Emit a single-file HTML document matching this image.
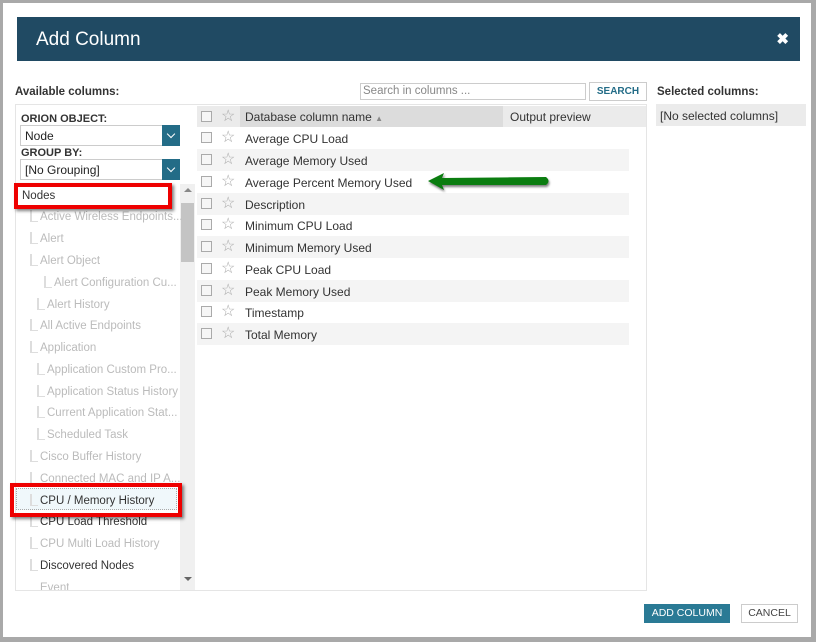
<!DOCTYPE html>
<html><head><style>
*{box-sizing:border-box;margin:0;padding:0}
body{width:816px;height:642px;background:#a9a9a9;font-family:"Liberation Sans",sans-serif;position:relative;overflow:hidden;font-size:12px;color:#222}
.dlg{position:absolute;left:3px;top:3px;width:808px;height:634px;background:#fff}
.hdr{position:absolute;left:17px;top:17px;width:783px;height:44px;background:#204a63;color:#fff;font-size:19px;padding:12px 0 0 19px}
.x{position:absolute;right:11px;top:13px;font-size:15px;font-weight:bold}
.abs{position:absolute}
.lbl{font-weight:bold;font-size:11px;color:#333}
.sel{position:absolute;left:20px;width:160px;height:21px;border:1px solid #ccc;padding:3px 4px;font-size:12px}
.sel b{position:absolute;right:-1px;top:-1px;width:18px;height:21px;background:#236c87}
.sel b:after{content:"";position:absolute;left:6px;top:6px;width:5px;height:5px;border-right:1px solid #fff;border-bottom:1px solid #fff;transform:rotate(45deg)}
.tr{position:absolute;font-size:11.5px;color:#bbb;white-space:nowrap}
.tr:before{content:"";position:absolute;left:-10px;top:-1px;width:6px;height:11px;border-left:2px solid #ddd;border-bottom:1px solid #ddd}
.row{position:absolute;left:197px;width:432px;height:22px}
.row.s{background:#f4f4f4}
.cb{position:absolute;left:4px;top:5px;width:11px;height:11px;border:1px solid #aaa;background:#f6f6f6}
.st{position:absolute;left:24px;top:0px;color:#aaa;font-size:16px;font-style:normal}
.row span.t{position:absolute;left:48px;top:5px;font-size:12px;color:#333}
.red{position:absolute;border:4px solid #e00;box-shadow:2px 2px 3px rgba(0,0,0,.5)}
</style></head><body>
<div class="dlg"></div>
<div class="hdr">Add Column<span class="x">✖</span></div>
<div class="abs lbl" style="left:15px;top:86px;font-size:11.5px">Available columns:</div>
<div class="abs" style="left:360px;top:83px;width:226px;height:17px;border:1px solid #ccc;color:#888;font-size:11.5px;padding:1px 2px">Search in columns ...</div>
<div class="abs" style="left:589px;top:82px;width:58px;height:19px;border:1px solid #ccc;color:#236c87;font-weight:bold;font-size:10px;text-align:center;line-height:17px">SEARCH</div>
<div class="abs lbl" style="left:657px;top:86px;font-size:11.5px">Selected columns:</div>
<div class="abs" style="left:15px;top:104px;width:632px;height:487px;border:1px solid #e5e5e5"></div>
<div class="abs lbl" style="left:21px;top:113px">ORION OBJECT:</div>
<div class="sel" style="top:125px">Node<b></b></div>
<div class="abs lbl" style="left:21px;top:147px">GROUP BY:</div>
<div class="sel" style="top:159px">[No Grouping]<b></b></div>
<div class="abs" style="left:180px;top:184px;width:15px;height:406px;background:#f0f0f0"></div>
<div class="abs" style="left:181px;top:203px;width:13px;height:59px;background:#c4c4c4"></div>
<div class="abs" style="left:184px;top:188px;border:4px solid transparent;border-bottom-color:#888;border-top:0"></div>
<div class="abs" style="left:184px;top:577px;border:4px solid transparent;border-top-color:#666;border-bottom:0"></div>
<div class="abs" style="left:22px;top:190px;font-size:11.5px;color:#333">Nodes</div>
<div class="tr" style="left:40px;top:211px">Active Wireless Endpoints...</div>
<div class="tr" style="left:40px;top:233px">Alert</div>
<div class="tr" style="left:40px;top:255px">Alert Object</div>
<div class="tr" style="left:54px;top:277px">Alert Configuration Cu...</div>
<div class="tr" style="left:47px;top:299px">Alert History</div>
<div class="tr" style="left:40px;top:320px">All Active Endpoints</div>
<div class="tr" style="left:40px;top:342px">Application</div>
<div class="tr" style="left:47px;top:364px">Application Custom Pro...</div>
<div class="tr" style="left:47px;top:386px">Application Status History</div>
<div class="tr" style="left:47px;top:407px">Current Application Stat...</div>
<div class="tr" style="left:47px;top:429px">Scheduled Task</div>
<div class="tr" style="left:40px;top:451px">Cisco Buffer History</div>
<div class="tr" style="left:40px;top:473px">Connected MAC and IP A...</div>
<div class="abs" style="left:16px;top:488px;width:161px;height:22px;background:#f0f8fb;border:1px dotted #aaa"></div>
<div class="tr" style="left:40px;top:495px;color:#333">CPU / Memory History</div>
<div class="tr" style="left:40px;top:516px;color:#333">CPU Load Threshold</div>
<div class="tr" style="left:40px;top:538px">CPU Multi Load History</div>
<div class="tr" style="left:40px;top:560px;color:#333">Discovered Nodes</div>
<div class="tr" style="left:40px;top:582px;height:8px;overflow:hidden">Event</div>
<div class="abs" style="left:15px;top:590px;width:182px;height:1px;background:#e5e5e5"></div>
<div class="red" style="left:14px;top:183px;width:158px;height:26px"></div>
<div class="red" style="left:10px;top:483px;width:172px;height:34px"></div>
<div class="abs" style="left:197px;top:106px;width:449px;height:21px;background:#ebebeb"></div>
<div class="abs" style="left:240px;top:106px;width:263px;height:21px;background:#dcdcdc"></div>
<div class="row" style="top:106px;background:none"><i class="cb"></i><i class="st">☆</i><span class="t" style="top:4px">Database column name <small style="font-size:8px;color:#888">▲</small></span></div>
<div class="abs" style="left:510px;top:110px;font-size:12px;color:#333">Output preview</div>
<div class="abs" style="left:646px;top:127px;width:1px;height:464px;background:#e5e5e5"></div>
<div class="row" style="top:127px"><i class="cb"></i><i class="st">☆</i><span class="t">Average CPU Load</span></div>
<div class="row s" style="top:149px"><i class="cb"></i><i class="st">☆</i><span class="t">Average Memory Used</span></div>
<div class="row" style="top:171px"><i class="cb"></i><i class="st">☆</i><span class="t">Average Percent Memory Used</span></div>
<div class="row s" style="top:193px"><i class="cb"></i><i class="st">☆</i><span class="t">Description</span></div>
<div class="row" style="top:214px"><i class="cb"></i><i class="st">☆</i><span class="t">Minimum CPU Load</span></div>
<div class="row s" style="top:236px"><i class="cb"></i><i class="st">☆</i><span class="t">Minimum Memory Used</span></div>
<div class="row" style="top:258px"><i class="cb"></i><i class="st">☆</i><span class="t">Peak CPU Load</span></div>
<div class="row s" style="top:280px"><i class="cb"></i><i class="st">☆</i><span class="t">Peak Memory Used</span></div>
<div class="row" style="top:301px"><i class="cb"></i><i class="st">☆</i><span class="t">Timestamp</span></div>
<div class="row s" style="top:323px"><i class="cb"></i><i class="st">☆</i><span class="t">Total Memory</span></div>
<svg class="abs" style="left:424px;top:170px" width="132" height="24"><g filter="drop-shadow(1px 2px 1px rgba(0,0,0,.5))"><path d="M4 11 L20 3 L18 8 L122 7 Q127 11 122 15 L18 15 L20 20 Z" fill="#0b7d10"/></g></svg>
<div class="abs" style="left:656px;top:104px;width:150px;height:22px;background:#ebebeb;padding:5px 4px;font-size:12px;color:#333">[No selected columns]</div>
<div class="abs" style="left:644px;top:604px;width:86px;height:19px;background:#2a7a95;color:#fff;font-size:10.5px;text-align:center;line-height:19px">ADD COLUMN</div>
<div class="abs" style="left:741px;top:604px;width:57px;height:19px;border:1px solid #ccc;color:#444;font-size:10.5px;text-align:center;line-height:17px">CANCEL</div>
</body></html>
